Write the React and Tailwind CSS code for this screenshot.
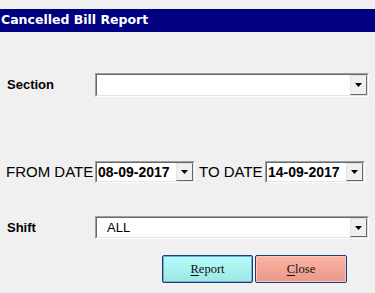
function Arrow() {
  return (
    <div className="w-[17px] h-full flex items-center justify-center bg-[#f0f0f0] border-t border-l border-t-[#e3e3e3] border-l-[#e3e3e3] border-b border-r border-b-[#696969] border-r-[#696969]">
      <svg width="7" height="4" viewBox="0 0 7 4"><path d="M0 0h7L3.5 4z" fill="#000" /></svg>
    </div>
  )
}

function Combo({ className, children }) {
  return (
    <div className={"border-t border-l border-t-[#a0a0a0] border-l-[#a0a0a0] border-b border-r border-b-white border-r-white " + className}>
      <div className="h-full flex bg-white border-t border-l border-t-[#696969] border-l-[#696969] border-b border-r border-b-[#e3e3e3] border-r-[#e3e3e3]">
        <div className="flex-1 flex items-center overflow-hidden">{children}</div>
        <Arrow />
      </div>
    </div>
  )
}

export default function App() {
  return (
    <div className="w-[375px] h-[293px] bg-[#f0f0f0] pt-[9px] flex flex-col font-['Liberation_Sans',Arial,sans-serif] text-black">
      <div className="h-[23px] bg-[#000080] text-white font-bold text-[12.5px] font-['DejaVu_Sans',sans-serif] pl-[1px] pt-[2px] leading-[17px]">
        Cancelled Bill Report
      </div>

      <div className="mt-[41px] flex items-center h-[24px]">
        <span className="w-[95px] pl-[7px] font-bold text-[13px]">Section</span>
        <Combo className="w-[274px] h-[24px]" />
      </div>

      <div className="mt-[64px] flex items-center h-[22px]">
        <span className="w-[95px] pl-[6px] text-[15px] whitespace-nowrap">FROM DATE</span>
        <Combo className="w-[100px] h-[22px]">
          <span className="pl-[1px] font-bold text-[14px]">08-09-2017</span>
        </Combo>
        <span className="w-[70px] pl-[4px] text-[15px] whitespace-nowrap">TO DATE</span>
        <Combo className="w-[100px] h-[22px]">
          <span className="pl-[1px] font-bold text-[14px]">14-09-2017</span>
        </Combo>
      </div>

      <div className="mt-[33px] flex items-center h-[23px]">
        <span className="w-[95px] pl-[7px] font-bold text-[13px]">Shift</span>
        <Combo className="w-[274px] h-[23px]">
          <span className="pl-[10px] text-[13px]">ALL</span>
        </Combo>
      </div>

      <div className="mt-[16px] flex gap-[2px] pl-[162px] font-['Liberation_Serif','Times_New_Roman',serif] text-[12.5px] text-[#111]">
        <button className="w-[91px] h-[28px] rounded-[2px] border border-[#1c3c78] bg-gradient-to-b from-[#b4fcfc] to-[#9ce8e0] shadow-[inset_0_0_0_1px_#78a8e0]">
          <span className="underline underline-offset-2">R</span>eport
        </button>
        <button className="w-[92px] h-[28px] rounded-[2px] border border-[#1c3c78] bg-gradient-to-b from-[#fcb4a4] to-[#e89888] shadow-[inset_0_0_0_1px_#f8c8bc]">
          <span className="underline underline-offset-2">C</span>lose
        </button>
      </div>
    </div>
  )
}
